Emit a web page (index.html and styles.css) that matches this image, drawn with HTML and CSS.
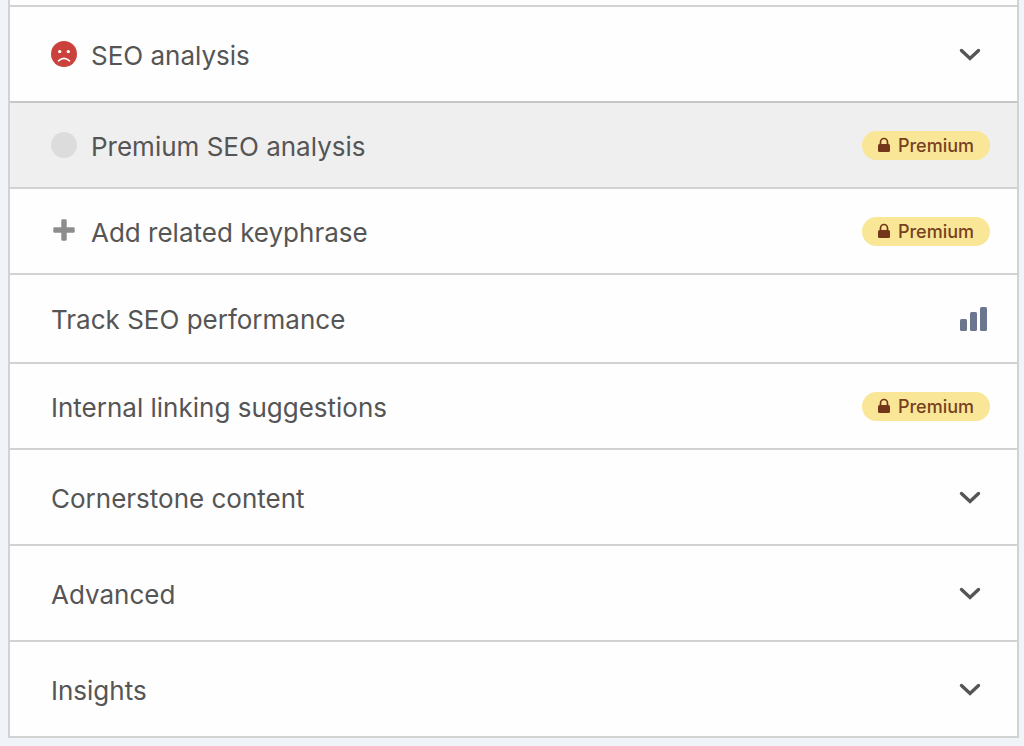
FILE: index.html
```html
<!DOCTYPE html>
<html lang="en">
<head>
<meta charset="utf-8">
<meta name="viewport" content="width=device-width, initial-scale=1">
<title>SEO settings</title>
<link rel="stylesheet" href="styles.css">
</head>
<body>
<svg class="sprite" aria-hidden="true">
  <symbol id="chevron" viewBox="0 0 22 14"><path d="M2.5 2.5 11 10.500 19.500 2.500" fill="none" stroke="currentColor" stroke-width="3.400" stroke-linecap="round" stroke-linejoin="miter"/></symbol>
  <symbol id="lock" viewBox="0 0 14 16"><path d="M3.500 8V5.200a3.500 3.700 0 0 1 7 0V8" fill="none" stroke="currentColor" stroke-width="1.700"/><rect x="1" y="7" width="12" height="8" rx="1.500" fill="currentColor"/></symbol>
</svg>
<main class="panel">
  <div class="panel-top"></div>
  <button class="row row-collapsible" type="button" aria-expanded="false">
    <svg class="status" viewBox="0 0 26 26" aria-hidden="true"><circle cx="13" cy="13" r="13" fill="#cb413b"/><circle cx="8.700" cy="10.600" r="1.700" fill="#fff"/><circle cx="17.300" cy="10.600" r="1.700" fill="#fff"/><path d="M7.500 19.800Q13 14.800 18.500 19.800" fill="none" stroke="#fff" stroke-width="1.700" stroke-linecap="round"/></svg>
    <span class="label">SEO analysis</span>
    <svg class="chevron" aria-hidden="true"><use href="#chevron"/></svg>
  </button>
  <button class="row row-locked" type="button">
    <svg class="status" viewBox="0 0 26 26" aria-hidden="true"><circle cx="13" cy="13" r="13" fill="#dcdcdc"/></svg>
    <span class="label">Premium SEO analysis</span>
    <span class="badge"><svg class="lock" aria-hidden="true"><use href="#lock"/></svg>Premium</span>
  </button>
  <button class="row" type="button">
    <svg class="status" viewBox="0 0 26 26" aria-hidden="true"><path d="M11.500 1.300h3q1.200 0 1.200 1.200v6.800h6.800q1.200 0 1.200 1.200v3q0 1.200-1.200 1.200h-6.800v6.800q0 1.200-1.200 1.200h-3q-1.200 0-1.200-1.200v-6.800H3.500q-1.200 0-1.200-1.200v-3q0-1.200 1.200-1.200h6.800V2.500q0-1.200 1.200-1.200Z" fill="#8c8c8c"/></svg>
    <span class="label">Add related keyphrase</span>
    <span class="badge"><svg class="lock" aria-hidden="true"><use href="#lock"/></svg>Premium</span>
  </button>
  <button class="row row-track" type="button">
    <span class="label">Track SEO performance</span>
    <svg class="bars" viewBox="0 0 28 26" aria-hidden="true"><g fill="#6a778e"><rect x="0" y="13" width="7" height="12" rx="1.500"/><rect x="10" y="6" width="7" height="19" rx="1.500"/><rect x="20" y="1" width="7" height="24" rx="1.500"/></g></svg>
  </button>
  <button class="row" type="button">
    <span class="label">Internal linking suggestions</span>
    <span class="badge"><svg class="lock" aria-hidden="true"><use href="#lock"/></svg>Premium</span>
  </button>
  <button class="row row-collapsible" type="button" aria-expanded="false">
    <span class="label">Cornerstone content</span>
    <svg class="chevron" aria-hidden="true"><use href="#chevron"/></svg>
  </button>
  <button class="row row-collapsible" type="button" aria-expanded="false">
    <span class="label">Advanced</span>
    <svg class="chevron" aria-hidden="true"><use href="#chevron"/></svg>
  </button>
  <button class="row row-collapsible" type="button" aria-expanded="false">
    <span class="label">Insights</span>
    <svg class="chevron" aria-hidden="true"><use href="#chevron"/></svg>
  </button>
</main>
</body>
</html>
```
FILE: styles.css
```css
* {
  box-sizing: border-box;
}

body {
  margin: 0;
  padding: 0 5px 8px 8px;
  background: #f0f3f8;
  color: #555;
  font-family: Inter, "Liberation Sans", sans-serif;
}

.sprite {
  display: none;
}

.panel {
  border: 2px solid #d2d2d2;
  border-top: 0;
  background: #fefefe;
}

.panel-top {
  height: 5px;
}

.row {
  display: flex;
  align-items: center;
  width: 100%;
  min-height: 86px;
  margin: 0;
  padding: 0 27px 0 41px;
  border: 0;
  border-top: 2px solid #d2d2d2;
  background: transparent;
  color: inherit;
  font: inherit;
  font-size: 26px;
  line-height: 32px;
  text-align: left;
  cursor: pointer;
}

.row-collapsible {
  min-height: 96px;
  padding-right: 36px;
}

.row-track {
  min-height: 89px;
  padding-right: 29px;
}

.row-locked {
  border-top-color: #c6c6c6;
  background: #efefef;
}

.label {
  flex: 1;
  padding-top: 3px;
}

.status {
  flex: none;
  width: 26px;
  height: 26px;
  margin-right: 14px;
}

.chevron {
  flex: none;
  width: 22px;
  height: 14px;
  margin-top: 2px;
}

.bars {
  flex: none;
  width: 28px;
  height: 26px;
}

.badge {
  display: flex;
  align-items: center;
  gap: 7px;
  padding: 2px 16px 2px 15px;
  border-radius: 15px;
  background: #f9e697;
  color: #78401f;
  font-size: 18px;
  font-weight: 500;
  line-height: 25px;
}

.lock {
  width: 14px;
  height: 16px;
  color: #74361a;
}
```
